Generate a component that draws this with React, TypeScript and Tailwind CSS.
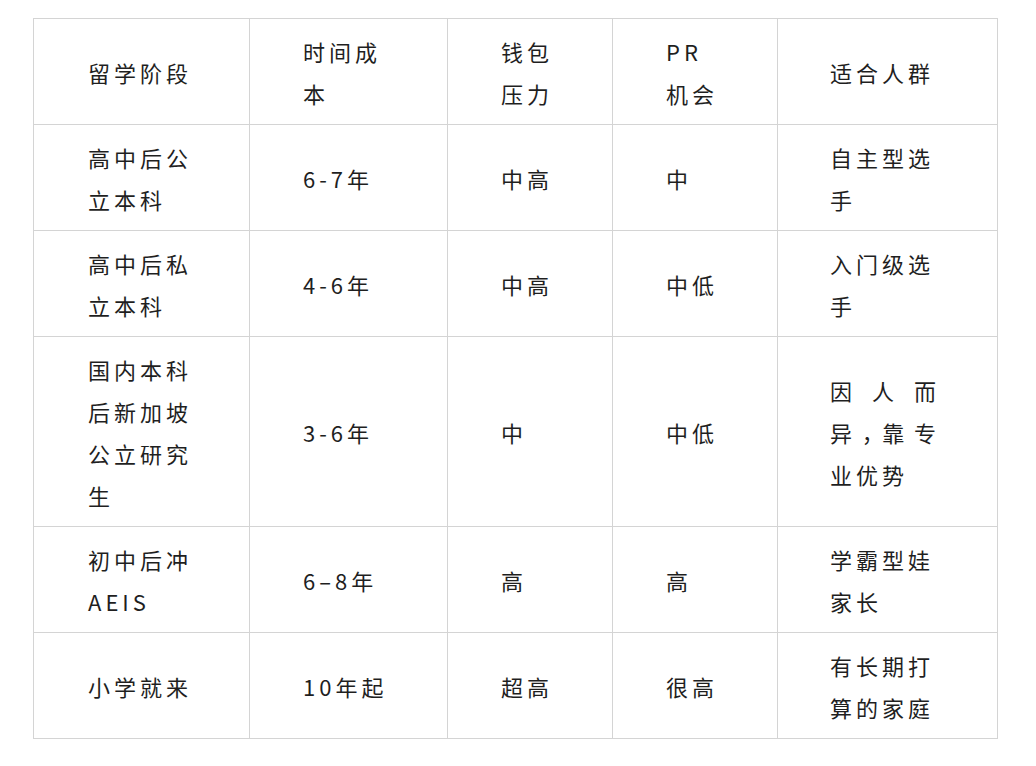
import React from "react";

type Cell = string[];

const headers: Cell[] = [["留学阶段"], ["时间成", "本"], ["钱包", "压力"], ["PR", "机会"], ["适合人群"]];

const rows: Cell[][] = [
  [["高中后公", "立本科"], ["6-7年"], ["中高"], ["中"], ["自主型选", "手"]],
  [["高中后私", "立本科"], ["4-6年"], ["中高"], ["中低"], ["入门级选", "手"]],
  [["国内本科", "后新加坡", "公立研究", "生"], ["3-6年"], ["中"], ["中低"], ["__special__"]],
  [["初中后冲", "AEIS"], ["6–8年"], ["高"], ["高"], ["学霸型娃", "家长"]],
  [["小学就来"], ["10年起"], ["超高"], ["很高"], ["有长期打", "算的家庭"]],
];

const colClass = [
  "w-[216px] pl-[54px]",
  "w-[198px] pl-[53px]",
  "w-[165px] pl-[53px]",
  "w-[165px] pl-[53px]",
  "w-[220px] pl-[52px]",
];

function Special() {
  return (
    <div className="w-[110px]">
      <div className="[text-align-last:justify] text-justify">因人而</div>
      <div className="[text-align-last:justify] text-justify">
        异<span className="[font-feature-settings:'halt']">，</span>靠专
      </div>
      <div>业优势</div>
    </div>
  );
}

function CellBody({ lines }: { lines: Cell }) {
  if (lines[0] === "__special__") return <Special />;
  return (
    <>
      {lines.map((l, i) => (
        <div key={i} className="whitespace-nowrap">
          {l}
        </div>
      ))}
    </>
  );
}

export default function App() {
  return (
    <div className="min-h-screen bg-white pl-[33px] pt-[18px]">
      <table
        className="table-fixed border-collapse text-[22px] leading-[42px] tracking-[4px] text-[#1f1f1f]"
        style={{ fontFamily: '"Noto Sans CJK SC", "Noto Sans", sans-serif' }}
      >
        <tbody>
          <tr className="h-[106px]">
            {headers.map((h, i) => (
              <td key={i} className={`${colClass[i]} border border-[#d4d4d4] py-[10px] align-middle`}>
                <CellBody lines={h} />
              </td>
            ))}
          </tr>
          {rows.map((r, ri) => (
            <tr key={ri} className={ri === 2 ? "h-[190px]" : "h-[106px]"}>
              {r.map((c, ci) => (
                <td key={ci} className={`${colClass[ci]} border border-[#d4d4d4] py-[10px] align-middle`}>
                  <CellBody lines={c} />
                </td>
              ))}
            </tr>
          ))}
        </tbody>
      </table>
    </div>
  );
}
